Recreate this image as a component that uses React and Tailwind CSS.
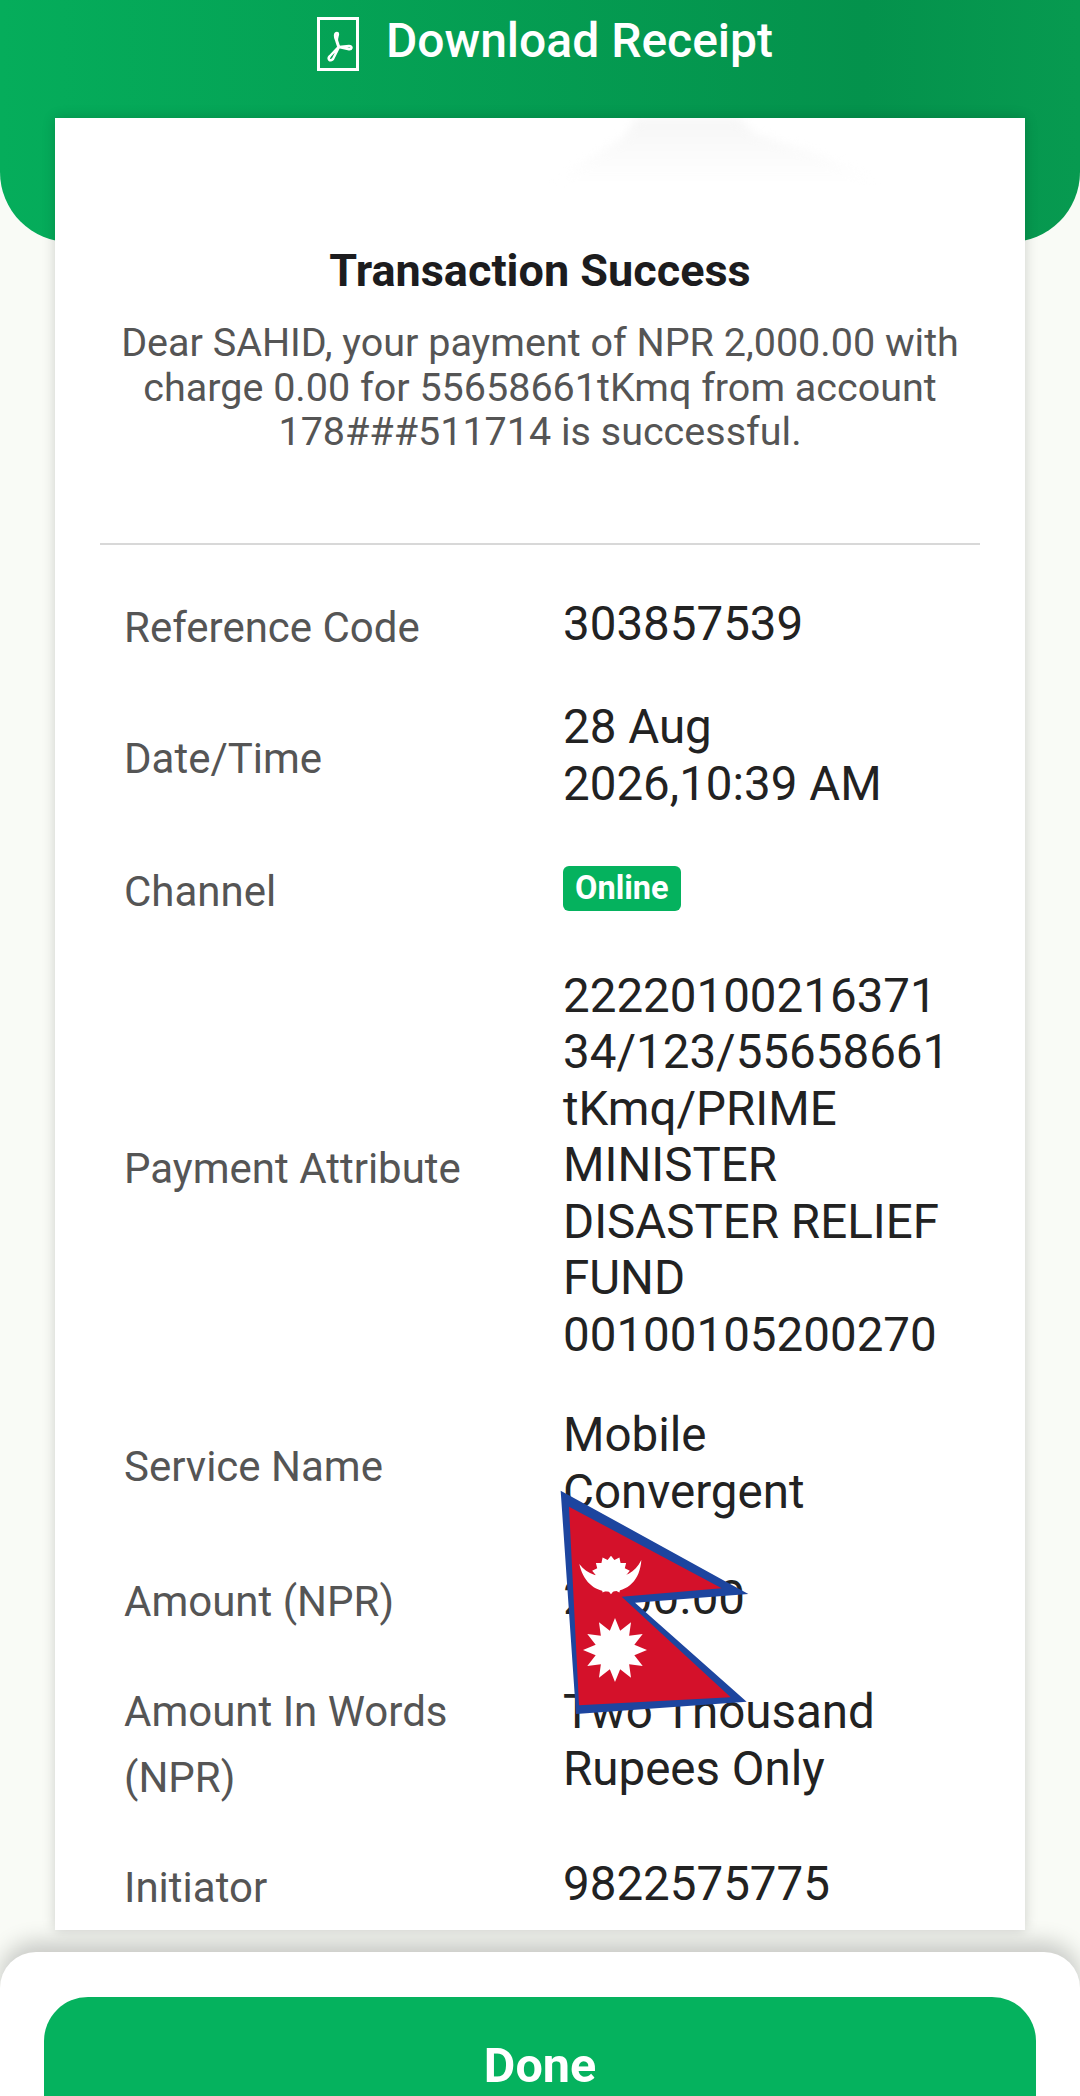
import React from 'react';

const rows = [
    { label: 'Reference Code', value: ['303857539'], cls: 'mt-[51px]' },
    { label: 'Date/Time', value: ['28 Aug', '2026,10:39 AM'], cls: 'mt-[47px]' },
    { label: 'Channel', badge: 'Online', cls: 'mt-[48px]' },
    {
        label: 'Payment Attribute',
        value: ['22220100216371', '34/123/55658661', 'tKmq/PRIME', 'MINISTER', 'DISASTER RELIEF', 'FUND', '00100105200270'],
        cls: 'mt-[51px]',
    },
    { label: 'Service Name', value: ['Mobile', 'Convergent'], cls: 'mt-[44px]' },
    { label: 'Amount (NPR)', value: ['2,000.00'], cls: 'mt-[50px]' },
    { label: ['Amount In Words', '(NPR)'], value: ['Two Thousand', 'Rupees Only'], cls: 'mt-[48px]' },
    { label: 'Initiator', value: ['9822575775'], cls: 'mt-[49px]' },
];

const PdfIcon = () => (
    <svg width="42" height="54" viewBox="0 0 42 54" fill="none" stroke="white">
        <rect x="1.500" y="1.500" width="39" height="51" strokeWidth="3" />
        <path
            d="M20 16c-2.500 0-2.500 4 -.5 8l2 6-8.500 9c-3 3 0 6 3 3l6-12 9 2c4 1 5-3 1-3l-10 1-2-6c-1-3 2.500-8 0-8z"
            strokeWidth="2.500"
            strokeLinejoin="round"
        />
    </svg>
);

// sun points for the flag, radii in the flag's own units
const starPoints = (cx, cy, outer, inner, n) => {
    const pts = [];
    for (let i = 0; i < n * 2; i++) {
        const r = i % 2 === 0 ? outer : inner;
        const a = (Math.PI * i) / n - Math.PI / 2;
        pts.push(`${(cx + r * Math.cos(a)).toFixed(1)},${(cy + r * Math.sin(a)).toFixed(1)}`);
    }
    return pts.join(' ');
};

const NepalFlag = () => (
    <svg
        className="absolute left-[560px] top-[1490px]"
        width="190"
        height="225"
        viewBox="180 90 570 675"
    >
        <polygon
            points="182,92 745,402 405,428 740,725 228,762"
            fill="#1d459f"
        />
        <polygon
            points="207,140 665,385 365,410 692,712 237,736"
            fill="#d4112a"
        />
        <path
            d="M238 312C262 345 300 352 335 352C372 352 405 340 424 300C420 360 385 395 330 395C280 395 248 360 238 312Z"
            fill="white"
        />
        <polygon points={starPoints(333, 345, 58, 46, 14)} fill="white" />
        <polygon points={starPoints(345, 570, 96, 60, 12)} fill="white" />
    </svg>
);

const App = () => {
    return (
        <div className="relative h-[2096px] w-[1080px] overflow-hidden bg-[#f9fbf6] font-['Roboto',sans-serif] flex flex-col">
            {/* Green header */}
            <header className="h-[242px] shrink-0 rounded-b-[70px] bg-gradient-to-r from-[#05ad5b] via-[#04924c] via-80% to-[#079a50]">
                <div className="flex items-center justify-center gap-[27px] pl-[10px] pt-[17px]">
                    <PdfIcon />
                    <span className="-mt-[6px] text-[48px] font-medium leading-[50px] text-white">Download Receipt</span>
                </div>
            </header>

            {/* Receipt card */}
            <main className="relative -mt-[124px] mx-[55px] h-[1812px] shrink-0 overflow-hidden bg-white shadow-[0_0_12px_rgba(0,0,0,0.18)]">
                <div className="absolute left-[496px] top-0 h-[64px] w-[330px] blur-[4px]">
                    <div className="h-full w-full bg-gradient-to-b from-[#f6f6f6] to-white [clip-path:polygon(26%_0,57%_0,62%_25%,80%_55%,100%_100%,0_100%,22%_30%)]" />
                </div>
                <div className="relative pt-[128px]">
                    <h1 className="text-center text-[45px] font-bold leading-[50px] text-[#1c1c1e]">Transaction Success</h1>
                    <p className="mt-[25px] text-center text-[39.500px] leading-[44.500px] text-[#555555]">
                        Dear SAHID, your payment of NPR 2,000.00 with
                        <br />
                        charge 0.00 for 55658661tKmq from account
                        <br />
                        178###511714 is successful.
                    </p>
                    <div className="mx-[45px] mt-[88px] h-[2px] bg-[#d8d8d8]" />
                    <div className="pl-[69px]">
                        {rows.map((row) => (
                            <div key={row.label} className={`flex items-center ${row.cls}`}>
                                <div className="w-[439px] shrink-0 translate-y-[4px] text-[42px] text-[#555555]">
                                    {Array.isArray(row.label)
                                        ? row.label.map((l) => <div key={l} className="leading-[66px]">{l}</div>)
                                        : <div className="leading-[56.500px]">{row.label}</div>}
                                </div>
                                {row.badge ? (
                                    <span className="rounded-[6px] bg-[#05b25e] px-[12px] text-[32.500px] font-bold leading-[45px] text-white">
                                        {row.badge}
                                    </span>
                                ) : (
                                    <div className="text-[47.500px] leading-[56.500px] text-[#222222]">
                                        {row.value.map((v) => (
                                            <div key={v}>{v}</div>
                                        ))}
                                    </div>
                                )}
                            </div>
                        ))}
                    </div>
                </div>
            </main>

            {/* Bottom sheet */}
            <footer className="mt-[22px] flex-1 rounded-t-[36px] bg-white px-[44px] pt-[45px] shadow-[0_-10px_22px_rgba(0,0,0,0.2)]">
                <button className="flex h-[140px] w-full justify-center rounded-t-[44px] bg-[#05b25e] pt-[43px] text-[48.500px] font-bold leading-[52px] text-white">
                    Done
                </button>
            </footer>

            <NepalFlag />
        </div>
    );
};

export default App;
